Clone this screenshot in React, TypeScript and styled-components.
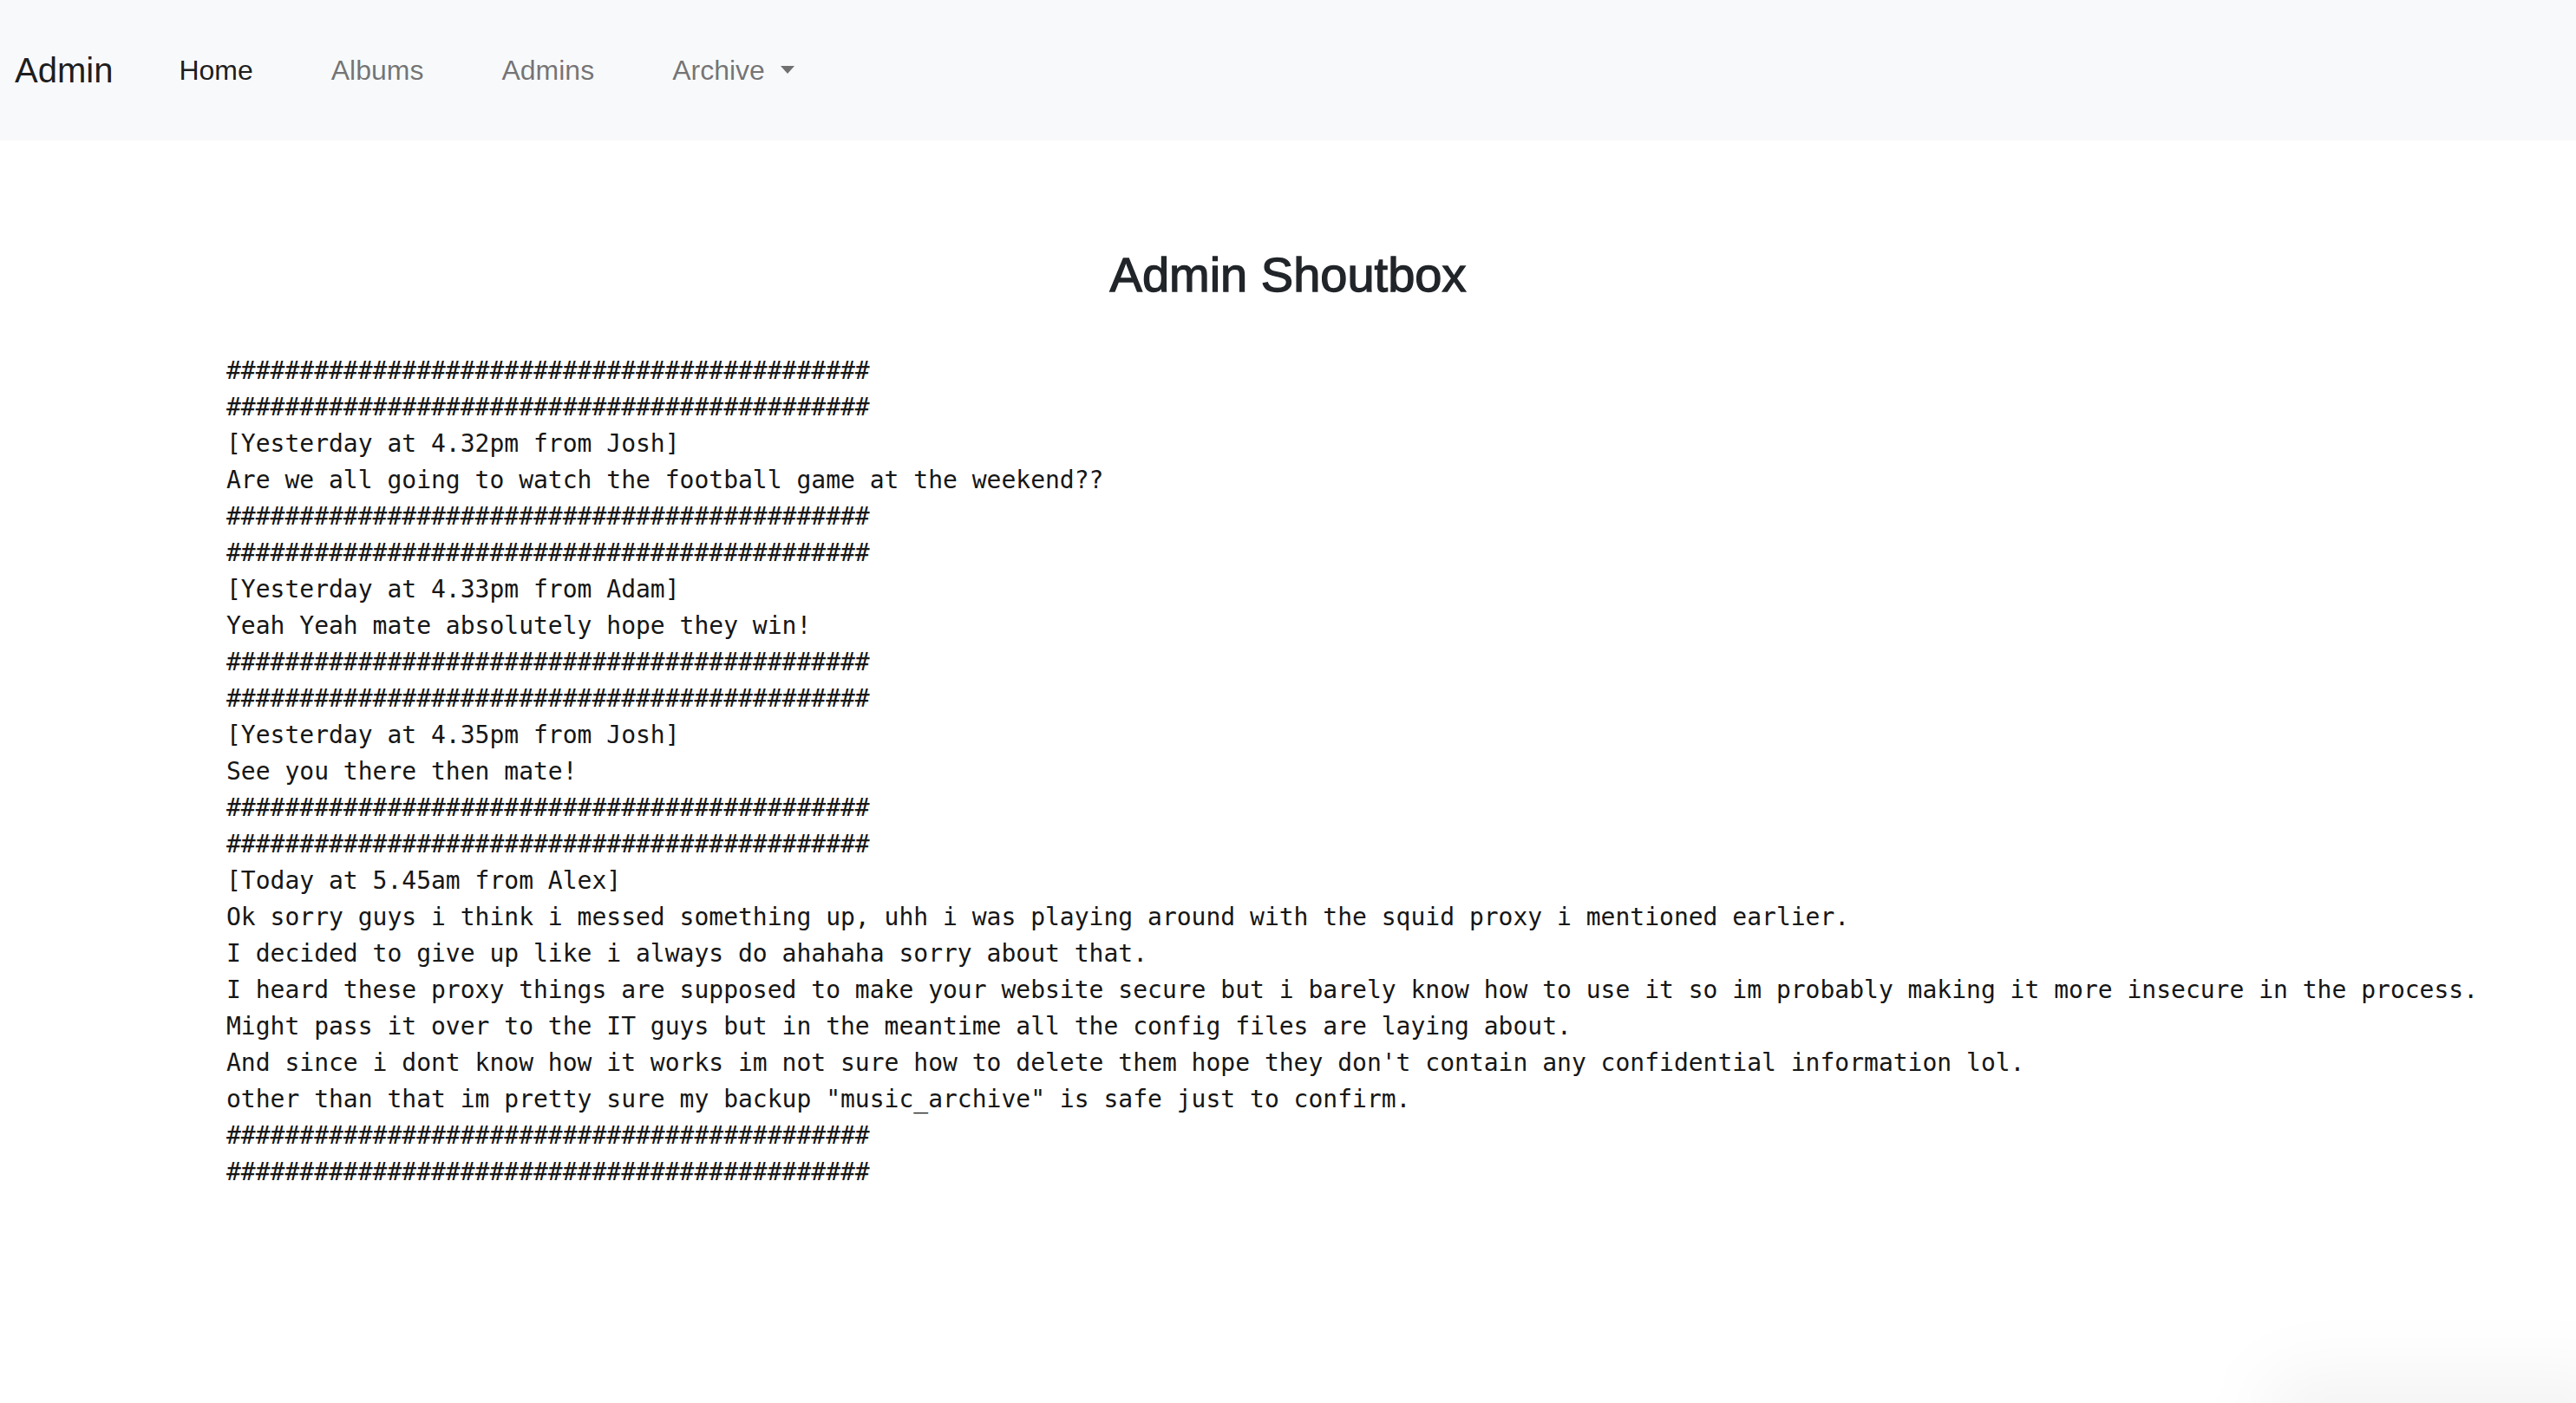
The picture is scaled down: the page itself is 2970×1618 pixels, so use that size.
import React from "react";
import styled, { createGlobalStyle } from "styled-components";

const GlobalStyle = createGlobalStyle`
  html, body {
    margin: 0;
    padding: 0;
    background: #ffffff;
  }
  body {
    font-family: "Liberation Sans", Arial, Helvetica, sans-serif;
    color: #212529;
  }
  #root {
    min-height: 100vh;
  }
`;

const Page = styled.div`
  min-height: 100vh;
  display: flex;
  flex-direction: column;
  position: relative;
  overflow: hidden;
`;

const NavBar = styled.nav`
  display: flex;
  align-items: center;
  height: 162px;
  padding: 0 16px;
  background: #f8f9fa;
  box-sizing: border-box;
`;

const Brand = styled.a`
  font-size: 40px;
  line-height: 60px;
  color: rgba(0, 0, 0, 0.9);
  text-decoration: none;
  margin-right: 31px;
  padding-left: 1px;
`;

const NavList = styled.ul`
  display: flex;
  align-items: center;
  list-style: none;
  margin: 0;
  padding: 0;
`;

const NavLink = styled.a<{ $active?: boolean }>`
  display: inline-flex;
  align-items: center;
  padding: 0 45px;
  font-size: 32px;
  line-height: 48px;
  text-decoration: none;
  color: ${(p) => (p.$active ? "rgba(0, 0, 0, 0.9)" : "rgba(0, 0, 0, 0.55)")};
`;

const Caret = styled.span`
  display: inline-block;
  width: 0;
  height: 0;
  margin-left: 18px;
  margin-top: -1px;
  border-top: 9px solid currentColor;
  border-left: 8px solid transparent;
  border-right: 8px solid transparent;
`;

const Main = styled.main`
  display: flex;
  flex-direction: column;
  padding-top: 121px;
`;

const Title = styled.h3`
  margin: 0 0 57px;
  text-align: center;
  font-size: 56px;
  line-height: 1.2;
  font-weight: 500;
  color: #212529;
  -webkit-text-stroke: 1.3px #212529;
`;

const Shout = styled.pre`
  margin: 0;
  padding-left: 261px;
  font-family: "DejaVu Sans Mono", "Liberation Mono", monospace;
  font-size: 28px;
  line-height: 42px;
  color: #161616;
  white-space: pre;
`;

const CornerShade = styled.div`
  position: absolute;
  right: -60px;
  bottom: -60px;
  width: 420px;
  height: 90px;
  border-radius: 60px;
  background: rgba(0, 0, 0, 0.05);
  filter: blur(40px);
  pointer-events: none;
`;

const HASH = "#".repeat(44);

const log = [
  HASH,
  HASH,
  "[Yesterday at 4.32pm from Josh]",
  "Are we all going to watch the football game at the weekend??",
  HASH,
  HASH,
  "[Yesterday at 4.33pm from Adam]",
  "Yeah Yeah mate absolutely hope they win!",
  HASH,
  HASH,
  "[Yesterday at 4.35pm from Josh]",
  "See you there then mate!",
  HASH,
  HASH,
  "[Today at 5.45am from Alex]",
  "Ok sorry guys i think i messed something up, uhh i was playing around with the squid proxy i mentioned earlier.",
  "I decided to give up like i always do ahahaha sorry about that.",
  "I heard these proxy things are supposed to make your website secure but i barely know how to use it so im probably making it more insecure in the process.",
  "Might pass it over to the IT guys but in the meantime all the config files are laying about.",
  "And since i dont know how it works im not sure how to delete them hope they don't contain any confidential information lol.",
  'other than that im pretty sure my backup "music_archive" is safe just to confirm.',
  HASH,
  HASH,
].join("\n");

const links = [
  { label: "Home", active: true },
  { label: "Albums" },
  { label: "Admins" },
  { label: "Archive", dropdown: true },
];

export default function App() {
  return (
    <Page>
      <GlobalStyle />
      <NavBar>
        <Brand href="#">Admin</Brand>
        <NavList>
          {links.map((l) => (
            <li key={l.label}>
              <NavLink href="#" $active={l.active}>
                {l.label}
                {l.dropdown && <Caret />}
              </NavLink>
            </li>
          ))}
        </NavList>
      </NavBar>
      <Main>
        <Title>Admin Shoutbox</Title>
        <Shout>{log}</Shout>
      </Main>
      <CornerShade />
    </Page>
  );
}
